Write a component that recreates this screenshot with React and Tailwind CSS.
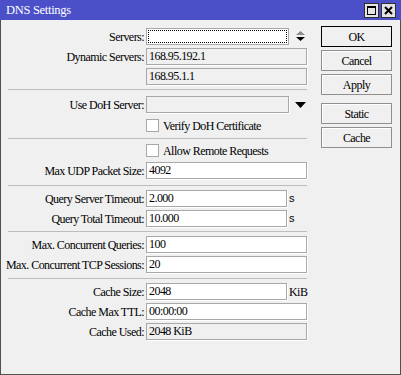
import React from "react"

function Row({ label, children }) {
    return (
        <div className="flex items-center h-[17px]">
            <div className="w-[143px] flex justify-end whitespace-nowrap">{label}</div>
            <div className="ml-[2px] flex items-center h-full">{children}</div>
        </div>
    )
}

function Field({ value, size = "w-[161px]", readOnly }) {
    return (
        <div className={`${size} h-[17px] border border-[#a8a8a8] shadow-[1px_1px_0_#ffffff] ${readOnly ? "bg-[#f0f0f0]" : "bg-white"} pl-[2px] leading-[15px] whitespace-nowrap overflow-hidden`}>
            {value}
        </div>
    )
}

function Check({ label }) {
    return (
        <div className="flex items-center h-[13px] ml-[145px]">
            <div className="w-[13px] h-[13px] border border-[#a8a8a8] bg-white" />
            <span className="ml-[4px] whitespace-nowrap">{label}</span>
        </div>
    )
}

function Sep({ top, bottom }) {
    return <div className={`${top} ${bottom} ml-[7px] w-[299px] h-px bg-[#bdbdbd]`} />
}

function Btn({ children, primary, extra = "" }) {
    return (
        <div className={`${extra} w-[71px] h-[21px] flex items-center justify-center border ${primary ? "border-black" : "border-[#8f8f8f] shadow-[inset_1px_1px_0_#ffffff]"}`}>
            {children}
        </div>
    )
}

export default function App() {
    return (
        <div className="w-[401px] h-[375px] bg-[#f0f0f0] text-[12px] text-black font-['Liberation_Serif'] tracking-[-0.55px] leading-none">
            {/* title bar */}
            <div className="h-[20px] bg-[#4b50c9] flex items-center pl-[6px] pr-[5px]">
                <span className="text-white text-[12.5px] tracking-[-0.3px]">DNS Settings</span>
                <div className="ml-auto flex gap-[2px]">
                    <div className="w-[15px] h-[15px] border border-[#303030] bg-[#e4e4e4] flex items-center justify-center">
                        <div className="w-[9px] h-[9px] border border-black border-t-2" />
                    </div>
                    <div className="w-[15px] h-[15px] border border-[#303030] bg-[#e4e4e4] flex items-center justify-center">
                        <svg width="9" height="9" viewBox="0 0 9 9">
                            <path d="M1 1 L8 8 M8 1 L1 8" stroke="black" strokeWidth="2" />
                        </svg>
                    </div>
                </div>
            </div>

            <div className="h-[355px] border-x border-b border-[#505050] flex">
                {/* form */}
                <div className="w-[308px] flex flex-col pt-[8px]">
                    <Row label="Servers:">
                        <div className="w-[143px] h-[17px] border border-[#a8a8a8] bg-white p-[1px]">
                            <div className="w-full h-full border border-dotted border-black" />
                        </div>
                        <svg className="ml-[7px]" width="9" height="11" viewBox="0 0 9 11">
                            <polygon points="4.5,0 0,4 9,4" fill="#8a8a8a" />
                            <polygon points="0,6 9,6 4.5,10" fill="black" />
                        </svg>
                    </Row>
                    <div className="mt-[3px]">
                        <Row label="Dynamic Servers:"><Field value="168.95.192.1" readOnly /></Row>
                    </div>
                    <div className="mt-[3px]">
                        <Row label=""><Field value="168.95.1.1" readOnly /></Row>
                    </div>
                    <Sep top="mt-[4px]" bottom="mb-[6px]" />
                    <Row label="Use DoH Server:">
                        <Field value="" size="w-[143px]" readOnly />
                        <svg className="ml-[6px]" width="11" height="6" viewBox="0 0 11 6">
                            <polygon points="0,0 11,0 5.5,6" fill="black" />
                        </svg>
                    </Row>
                    <div className="mt-[6px]"><Check label="Verify DoH Certificate" /></div>
                    <Sep top="mt-[6px]" bottom="mb-[5px]" />
                    <Check label="Allow Remote Requests" />
                    <div className="mt-[5px]">
                        <Row label="Max UDP Packet Size:"><Field value="4092" /></Row>
                    </div>
                    <Sep top="mt-[6px]" bottom="mb-[4px]" />
                    <Row label="Query Server Timeout:">
                        <Field value="2.000" size="w-[141px]" />
                        <span className="ml-[2px] font-['Liberation_Sans'] text-[11px] tracking-normal">s</span>
                    </Row>
                    <div className="mt-[3px]">
                        <Row label="Query Total Timeout:">
                            <Field value="10.000" size="w-[141px]" />
                            <span className="ml-[2px] font-['Liberation_Sans'] text-[11px] tracking-normal">s</span>
                        </Row>
                    </div>
                    <Sep top="mt-[4px]" bottom="mb-[4px]" />
                    <Row label="Max. Concurrent Queries:"><Field value="100" /></Row>
                    <div className="mt-[3px]">
                        <Row label="Max. Concurrent TCP Sessions:"><Field value="20" /></Row>
                    </div>
                    <Sep top="mt-[5px]" bottom="mb-[4px]" />
                    <Row label="Cache Size:">
                        <Field value="2048" size="w-[141px]" />
                        <span className="ml-[2px]">KiB</span>
                    </Row>
                    <div className="mt-[3px]">
                        <Row label="Cache Max TTL:"><Field value="00:00:00" /></Row>
                    </div>
                    <div className="mt-[3px]">
                        <Row label="Cache Used:"><Field value="2048 KiB" readOnly /></Row>
                    </div>
                </div>

                {/* buttons */}
                <div className="ml-[12px] flex flex-col pt-[6px]">
                    <Btn primary>OK</Btn>
                    <Btn extra="mt-[3px]">Cancel</Btn>
                    <Btn extra="mt-[3px]">Apply</Btn>
                    <Btn extra="mt-[8px]">Static</Btn>
                    <Btn extra="mt-[3px]">Cache</Btn>
                </div>
            </div>
        </div>
    )
}
